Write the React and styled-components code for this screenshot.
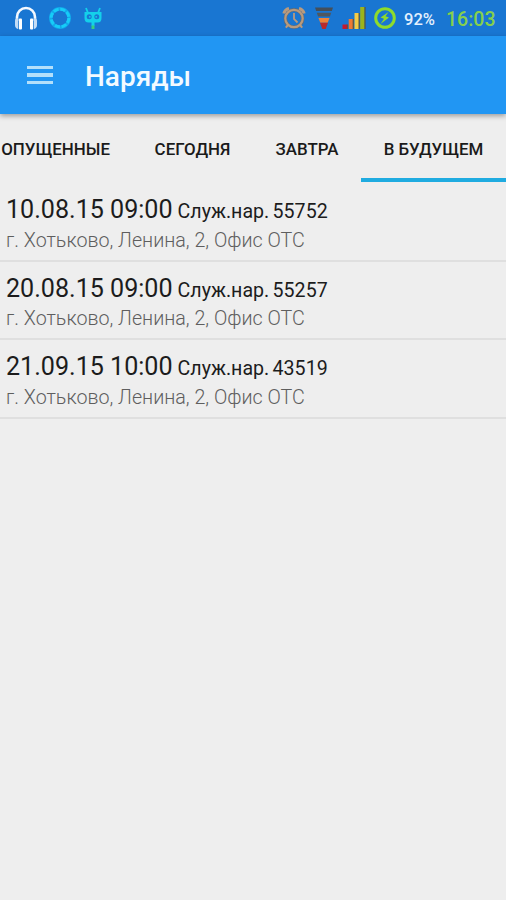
import React from 'react'
import styled, { createGlobalStyle } from "styled-components";

const orders = [
    { date: '10.08.15 09:00', number: '55752' },
    { date: '20.08.15 09:00', number: '55257' },
    { date: '21.09.15 10:00', number: '43519' },
]

const App = () => {
    return (
        <Screen>
        <GlobalStyle />
        <StatusBar>
            <Notifications>
                <HeadphonesIcon />
                <RingIcon />
                <RobotIcon />
            </Notifications>
            <SystemIcons>
                <AlarmIcon />
                <FunnelIcon />
                <SignalIcon />
                <ChargeIcon />
            </SystemIcons>
            <Battery>92%</Battery>
            <Clock>16:03</Clock>
        </StatusBar>
        <Toolbar>
            <Hamburger>
                <span />
                <span />
                <span />
            </Hamburger>
            <Title>Наряды</Title>
        </Toolbar>
        <Tabs>
            <Tab $width="132px">ОПУЩЕННЫЕ</Tab>
            <Tab $width="121px">СЕГОДНЯ</Tab>
            <Tab $width="108px">ЗАВТРА</Tab>
            <Tab $width="145px" $active>В БУДУЩЕМ</Tab>
        </Tabs>
        <List>
            {orders.map((order) => (
                <Row key={order.number}>
                    <Heading>
                        <OrderDate>{order.date}</OrderDate>
                        <OrderName>Служ.нар. {order.number}</OrderName>
                    </Heading>
                    <Address>г. Хотьково, Ленина, 2, Офис ОТС</Address>
                </Row>
            ))}
        </List>
        </Screen>
    )
}

const HeadphonesIcon = () => (
    <svg width="24" height="26" viewBox="0 0 24 26">
        <path d="M3 16V12a9 9 0 0 1 18 0v4" fill="none" stroke="#f4f9ff" strokeWidth="2.6" />
        <path d="M1 16q0-3 3-3v11q-3-1-3-4zM23 16q0-3-3-3v11q3-1 3-4z" fill="#c4ddf6" />
        <rect x="4.800" y="13.500" width="3.200" height="11" rx="1" fill="#fff" />
        <rect x="16" y="13.500" width="3.200" height="11" rx="1" fill="#fff" />
    </svg>
)

const RingIcon = () => (
    <svg width="24" height="24" viewBox="0 0 24 24">
        <circle cx="12" cy="12" r="9.300" fill="none" stroke="#12a9ea" strokeWidth="3.400" />
        <circle cx="12" cy="12" r="8.800" fill="none" stroke="#16cdf8" strokeWidth="3" strokeDasharray="5.200 1.710" />
    </svg>
)

const RobotIcon = () => (
    <svg width="20" height="25" viewBox="0 0 20 25">
        <path d="M3 2l2 5M17 2l-2 5" stroke="#12d2e8" strokeWidth="1.800" />
        <path d="M1.500 6h17v6q0 4.500-4 4.500h-9q-4 0-4-4.500z" fill="#14d0ea" />
        <circle cx="6.200" cy="10.800" r="2.500" fill="#1976d2" />
        <circle cx="13.800" cy="10.800" r="2.500" fill="#1976d2" />
        <circle cx="6.800" cy="10.800" r="0.900" fill="#14d0ea" />
        <circle cx="13.200" cy="10.800" r="0.900" fill="#14d0ea" />
        <path d="M10 15v5" stroke="#14d0ea" strokeWidth="3" />
        <path d="M10 19.500v3.500" stroke="#35cf83" strokeWidth="3" />
    </svg>
)

const AlarmIcon = () => (
    <svg width="24" height="24" viewBox="0 0 24 24" fill="none" stroke="#b89a7e">
        <circle cx="12" cy="12.500" r="8.700" strokeWidth="3.600" stroke="#5f6b76" />
        <circle cx="12" cy="12.500" r="8.700" strokeWidth="2.200" />
        <path d="M1.800 7.500Q2.800 3.500 7 2.500M22.200 7.500Q21.200 3.500 17 2.500" strokeWidth="3" />
        <path d="M12 7v6l3.500 3.500" strokeWidth="1.800" />
        <path d="M6 19l-2.200 2.600M18 19l2.200 2.600" strokeWidth="2" />
    </svg>
)

const FunnelIcon = () => (
    <svg width="20" height="24" viewBox="0 0 20 24">
        <path d="M1 1.500h18l-1.200 3.500H2.200z" fill="#444f5a" />
        <path d="M2.800 6.800h14.400l-1.300 3.600H4.100z" fill="#4f575e" />
        <path d="M4.500 12h11l-1.800 4.800H6.300z" fill="#ee8438" />
        <path d="M6 16.800h8L11.700 23H8.300z" fill="#b92a2c" />
    </svg>
)

const SignalIcon = () => (
    <svg width="24" height="24" viewBox="0 0 24 24">
        <path d="M0.500 18.500h5V23h-5z" fill="#c4182f" />
        <path d="M6.700 13h4.500v10H6.700z" fill="#ef7a33" />
        <path d="M12.500 7h4.500v16h-4.500z" fill="#f3cc48" />
        <path d="M18.200 1h4.500v22h-4.500z" fill="#9bb41c" />
        <path d="M5.500 18.500V23M11.300 13v10M17.100 7v16M23 1v22" stroke="#5b5338" strokeWidth="1.400" opacity="0.800" />
    </svg>
)

const ChargeIcon = () => (
    <svg width="22" height="22" viewBox="0 0 22 22">
        <circle cx="11" cy="11" r="9.300" fill="none" stroke="#8edb2c" strokeWidth="3" />
        <path d="M14.500 5L6.500 10.500l3.500 1.300-3.500 5.200 8.500-6.500-3.500-1.300z" fill="#8edb2c" />
    </svg>
)

const GlobalStyle = createGlobalStyle`
body {
    margin: 0;
    background: #eeeeee;
    font-family: Roboto, "Liberation Sans", sans-serif;
}
`;

const Screen = styled.div`
width: 506px;
height: 900px;
overflow: hidden;
background: #eeeeee;
`;

const StatusBar = styled.div`
display: flex;
align-items: center;
height: 36px;
background: #1976d2;
white-space: nowrap;
`;

const Notifications = styled.div`
display: flex;
align-items: center;
gap: 10px;
padding-left: 14px;

svg + svg + svg {
    margin-left: 1px;
}
`;

const SystemIcons = styled.div`
display: flex;
align-items: center;
gap: 8px;
margin-left: auto;
`;

const Battery = styled.div`
width: 32px;
margin-left: 8px;
padding-top: 2px;
color: #e3f0fd;
font-size: 16.500px;
font-weight: 500;
`;

const Clock = styled.div`
width: 50px;
margin: 0 10px;
padding-top: 3px;
color: #86d04c;
font-size: 19.500px;
font-weight: 500;
`;

const Toolbar = styled.div`
position: relative;
display: flex;
align-items: center;
height: 78px;
padding-left: 27px;
background: #2196f3;
box-shadow: 0 2px 5px rgba(0, 0, 0, 0.35);
`;

const Hamburger = styled.div`
display: flex;
flex-direction: column;
gap: 4px;
width: 26px;

span {
    height: 3.500px;
    background: #b3e0fb;
}
`;

const Title = styled.div`
margin-left: 32px;
padding-top: 3px;
color: #f3faff;
font-size: 28px;
font-weight: 500;
`;

const Tabs = styled.div`
display: flex;
height: 68px;
`;

const Tab = styled.div`
display: flex;
flex: none;
align-items: center;
justify-content: center;
box-sizing: border-box;
width: ${(props) => props.$width};
padding-top: 6px;
border-bottom: 4px solid ${(props) => (props.$active ? '#1fabe0' : 'transparent')};
color: #1a1a1a;
font-size: 16.900px;
font-weight: 500;
white-space: nowrap;

&:first-child {
    justify-content: flex-end;
    padding-right: 22px;
}
`;

const List = styled.div`
padding-top: 1px;
`;

const Row = styled.div`
box-sizing: border-box;
height: 78.700px;
padding: 11px 6px 0;
border-bottom: 2px solid #dfdfdf;
white-space: nowrap;
`;

const Heading = styled.div`
display: flex;
align-items: baseline;
gap: 5px;
height: 32.500px;
line-height: 31px;
color: #1c1c1c;
`;

const OrderDate = styled.span`
font-size: 25.100px;
`;

const OrderName = styled.span`
font-size: 19.600px;
word-spacing: -1.500px;
`;

const Address = styled.div`
line-height: 27px;
color: #5e5e5e;
font-size: 19.700px;
font-weight: 300;
`;

export default App;
